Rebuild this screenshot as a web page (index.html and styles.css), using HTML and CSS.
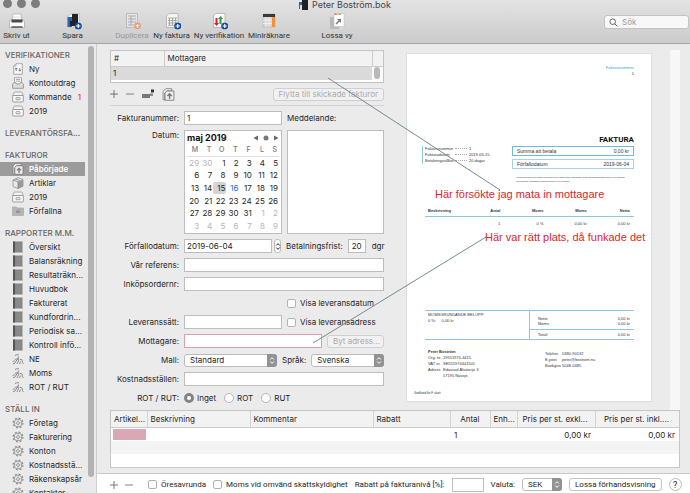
FILE: index.html
```html
<!DOCTYPE html>
<html lang="sv">
<head>
<meta charset="utf-8">
<title>Peter Boström.bok</title>
<link rel="stylesheet" href="styles.css">
</head>
<body>
<svg class="defs" aria-hidden="true">
  <symbol id="i-plus-badge" viewBox="0 0 8 8"><circle cx="4" cy="4" r="3.8" fill="currentColor"/><path d="M4 1.8v4.4M1.8 4h4.4" stroke="#fff" stroke-width="1.2"/></symbol>
  <symbol id="i-page" viewBox="0 0 12 12"><path d="M4 .7h6.3v10.6H1.700V3z" fill="#f7f7f7" stroke="#999" stroke-width=".8"/><path d="M1.700 3H4V.7" fill="none" stroke="#999" stroke-width=".7"/><path d="M4.200 8V5M3 6.200l1.200-1.300 1.200 1.300M7.800 5v3M6.600 6.900l1.200 1.300L9 6.900" fill="none" stroke="#777" stroke-width=".9"/></symbol>
  <symbol id="i-tray" viewBox="0 0 12 12"><path d="M2.500 6V.7h7V6M4 2.500h4M4 4.200h4" fill="#f5f5f5" stroke="#999" stroke-width=".8"/><path d="M.6 7.500 2 5.500h1.500l1 1.500h3l1-1.500H10l1.400 2v3.800H.6z" fill="#ddd" stroke="#888" stroke-width=".8"/></symbol>
  <symbol id="i-box" viewBox="0 0 12 12"><path d="M2.300 1h7.400l1.600 3.500H.7z" fill="#f2f2f2" stroke="#999" stroke-width=".8"/><rect x=".6" y="4.500" width="10.800" height="6.500" rx="1" fill="#f6f6f6" stroke="#8d8d8d" stroke-width=".8"/><rect x="4" y="6.700" width="4" height="2" rx=".5" fill="#fff" stroke="#777" stroke-width=".7"/></symbol>
  <symbol id="i-upload" viewBox="0 0 12 12"><path d="M1 3.200 3.500.6H9v2H5L2.500 5v6H1z" fill="#eee" stroke="currentColor" stroke-width=".7"/><path d="M4.300 2.800H11v8.500H2.800V4.500z" fill="#eee" stroke="currentColor" stroke-width=".8"/><path d="M7 10V5.600M5 7.400 7 5.400l2 2" fill="none" stroke="currentColor" stroke-width="1.300"/></symbol>
  <symbol id="i-cube" viewBox="0 0 12 12"><path d="m1 3 5-2.300 5 1.800v6.800l-5 2.200-5-2z" fill="#e9e9e9" stroke="#888" stroke-width=".7"/><path d="m6 4.700 5-2.200v6.800l-5 2.200z" fill="#999"/><path d="m1 3 5 1.700v6.800M3.300 1.900l5 1.800" fill="none" stroke="#777" stroke-width=".7"/></symbol>
  <symbol id="i-folder" viewBox="0 0 12 12"><path d="M.5 2h4l1 1h6v7.500H.5z" fill="#b5b5b5" stroke="#a3a3a3" stroke-width=".6"/><circle cx="6" cy="6.500" r="2" fill="#888"/><path d="M4.200 5.700h3.600M5 8h2" stroke="#ccc" stroke-width=".6"/></symbol>
  <symbol id="i-book" viewBox="0 0 12 12"><rect x="1" y=".5" width="10" height="11" fill="#858585"/><path d="M2 .5v11" stroke="#555" stroke-width="2"/><path d="M4.500 3h4M4.500 5h4M4.500 7h4M4.500 9h4" stroke="#999" stroke-width=".7"/><path d="M10.500.5v11" stroke="#bbb"/></symbol>
  <symbol id="i-crest" viewBox="0 0 12 12"><path d="M3 2.500c2-1.500 3 0 4-1M1 10.800c1.500-.2 2.600-1 3-2.600l2-2.500c-1.500 0-2.200 1-3.200.5M6.500 3.500c-1 1.500.8 2.500 0 4.300-.4 1.300-1.500 2-1.300 3.200M8 6.500c1.500-.5 2.500.5 2.300 2s1 1.500 1 2.500M8.500 8.500l-1 2.500M.8 8.500l2-.8" fill="none" stroke="#858585" stroke-width="1"/></symbol>
  <symbol id="i-gear" viewBox="0 0 12 12"><circle cx="6" cy="6" r="4.900" fill="none" stroke="#888" stroke-width="1.200" stroke-dasharray="1.900 1.950"/><circle cx="6" cy="6" r="3.900" fill="#f1f1f1" stroke="#888" stroke-width=".8"/><circle cx="6" cy="6" r="1.500" fill="#ddd" stroke="#888" stroke-width=".7"/><path d="M6 2.200v2.300M6 7.500v2.300M2.200 6h2.300M7.500 6h2.300" stroke="#999" stroke-width=".6"/></symbol>
  <symbol id="i-updown" viewBox="0 0 6 9"><path d="M1.200 3.500 3 1.600l1.800 1.900M1.200 5.500 3 7.400l1.800-1.900" fill="none" stroke="currentColor" stroke-width="1"/></symbol>
</svg>

<header class="toolbar">
  <div class="titlebar">
    <span class="lights"><i></i><i></i><i></i></span>
    <h1><svg viewBox="0 0 9 10"><path d="M0 2h3v7H0z" fill="#2c62b5"/><path d="M1 5h3v5H1z" fill="#ddd"/><path d="M3 0h6v10H3z" fill="#1d2126"/></svg>Peter Boström.bok</h1>
  </div>
  <nav class="tools">
    <button><svg viewBox="0 0 18 18"><path d="M5 2h8l1 7H4z" fill="#fff" stroke="#aaa" stroke-width=".7"/><path d="M2.500 8h13l1 2v5.500h-15V10z" fill="#fff" stroke="#999" stroke-width=".6"/><path d="M3.500 7.500h11v3h-11z" fill="#4a4a4a"/><path d="M3.500 15h11" stroke="#555" stroke-width="1.500"/><path d="M5 5h8" stroke="#ddd"/></svg>Skriv ut</button>
    <button><svg viewBox="0 0 18 18"><path d="M4 4l4-2.500h7V15H4z" fill="#fff" stroke="#aaa" stroke-width=".6"/><path d="M3.500 5H8v10H3.500z" fill="#2c62b5"/><path d="M8 2h6v12H6V9h2z" fill="#202429"/><use href="#i-plus-badge" x="10.500" y="10.300" width="7.500" height="7.500" color="#174fa3"/></svg>Spara</button>
    <button disabled><svg viewBox="0 0 18 18"><path d="M3.500 1.500h11v14h-11z" fill="#e6e6e6" stroke="#aaa" stroke-width=".7"/><path d="M5 4h8M5 7h8M5 10h8M5 13h6M8 4v9" stroke="#aaa" stroke-width="1"/><use href="#i-plus-badge" x="11" y="10.300" width="7" height="7" color="#e69a74"/></svg>Duplicera</button>
    <button><svg viewBox="0 0 18 18"><path d="M6 1.500h9v14H3.500V4z" fill="#f6f6f6" stroke="#a5a5a5" stroke-width=".7"/><path d="M5 6h9M5 8.500h9M5 11h9M5 13.300h9M6.500 6v7M9.500 6v7M12.500 6v7" stroke="#999" stroke-width=".8"/><use href="#i-plus-badge" x="11" y="10.300" width="7.500" height="7.500" color="#174fa3"/></svg>Ny faktura</button>
    <button><svg viewBox="0 0 18 18"><path d="M6 1.500h9v14H3.500V4z" fill="#fafafa" stroke="#a5a5a5" stroke-width=".7"/><path d="M5.500 6h2v5H9l-2.500 3L4 11h1.500z" fill="#df2027"/><path d="M9.500 12h2V7H13l-2.500-3L8 7h1.500z" fill="#2e9b40"/><use href="#i-plus-badge" x="11" y="10.300" width="7.500" height="7.500" color="#174fa3"/></svg>Ny verifikation</button>
    <button><svg viewBox="0 0 18 18"><path d="M3 2h12v13H3z" fill="#d7d7d7" stroke="#aaa" stroke-width=".5"/><path d="M12 5h3v10h-3z" fill="#f3923a"/><path d="M6 5v10M9 5v10M3 8h9M3 11.500h9" stroke="#f8f8f8" stroke-width=".7"/><path d="M3 2h12v3H3z" fill="#38393c"/></svg>Miniräknare</button>
    <button><svg viewBox="0 0 18 18"><path d="M2 5h9v12H2z" fill="#b9b9b9"/><path d="M6 1.500h10v13H6z" fill="#fff" stroke="#bbb" stroke-width=".5"/><path d="M6.500 2.200h2.200" stroke="#e65148" stroke-width="1.300"/><path d="M8.700 2.200h2.200" stroke="#f2b93b" stroke-width="1.300"/><path d="M10.900 2.200h2.200" stroke="#63c257" stroke-width="1.300"/><path d="m8 12 3.500-3.500" stroke="#777" stroke-width="1.500"/><path d="M9 7h4v4z" fill="#777"/></svg>Lossa vy</button>
    <label class="search"><svg viewBox="0 0 9 9"><circle cx="3.700" cy="3.700" r="2.800" fill="none" stroke="#555" stroke-width=".9"/><path d="m5.800 5.800 2.500 2.500" stroke="#555" stroke-width="1"/></svg><input type="search" placeholder="Sök" aria-label="Sök"></label>
  </nav>
</header>

<div class="body">
  <aside class="sidebar">
    <section><h2>VERIFIKATIONER</h2>
      <a href="#"><svg><use href="#i-page"/></svg>Ny</a>
      <a href="#"><svg><use href="#i-tray"/></svg>Kontoutdrag</a>
      <a href="#"><svg><use href="#i-box"/></svg>Kommande<b>1</b></a>
      <a href="#"><svg><use href="#i-box"/></svg>2019</a></section>
    <section><h2>LEVERANTÖRSFA...</h2></section>
    <section><h2>FAKTUROR</h2>
      <a href="#" class="selected"><svg><use href="#i-upload"/></svg>Påbörjade</a>
      <a href="#"><svg><use href="#i-cube"/></svg>Artiklar</a>
      <a href="#"><svg><use href="#i-box"/></svg>2019</a>
      <a href="#"><svg><use href="#i-folder"/></svg>Förfallna</a></section>
    <section><h2>RAPPORTER M.M.</h2>
      <a href="#"><svg><use href="#i-book"/></svg>Översikt</a>
      <a href="#"><svg><use href="#i-book"/></svg>Balansräkning</a>
      <a href="#"><svg><use href="#i-book"/></svg>Resultaträkn...</a>
      <a href="#"><svg><use href="#i-book"/></svg>Huvudbok</a>
      <a href="#"><svg><use href="#i-book"/></svg>Fakturerat</a>
      <a href="#"><svg><use href="#i-book"/></svg>Kundfordrin...</a>
      <a href="#"><svg><use href="#i-book"/></svg>Periodisk sa...</a>
      <a href="#"><svg><use href="#i-book"/></svg>Kontroll infö...</a>
      <a href="#"><svg><use href="#i-crest"/></svg>NE</a>
      <a href="#"><svg><use href="#i-crest"/></svg>Moms</a>
      <a href="#"><svg><use href="#i-crest"/></svg>ROT / RUT</a></section>
    <section><h2>STÄLL IN</h2>
      <a href="#"><svg><use href="#i-gear"/></svg>Företag</a>
      <a href="#"><svg><use href="#i-gear"/></svg>Fakturering</a>
      <a href="#"><svg><use href="#i-gear"/></svg>Konton</a>
      <a href="#"><svg><use href="#i-gear"/></svg>Kostnadsstä...</a>
      <a href="#"><svg><use href="#i-gear"/></svg>Räkenskapsår</a>
      <a href="#"><svg><use href="#i-gear"/></svg>Kontakter</a></section>
    <span class="scrollbar"></span>
  </aside>

  <main>
    <div class="workspace">
      <div class="editor">
        <div class="invoices">
          <table>
            <thead><tr><th class="num">#</th><th>Mottagare</th><th class="bar"></th></tr></thead>
            <tbody><tr><td>1</td><td></td><td class="bar"><span class="thumb"></span></td></tr></tbody>
          </table>
        </div>
        <div class="actions">
          <button aria-label="Lägg till"><svg viewBox="0 0 8 8"><path d="M4 0v8M0 4h8" stroke="#666" stroke-width=".9"/></svg></button>
          <button aria-label="Ta bort"><svg viewBox="0 0 8 8"><path d="M0 4h8" stroke="#777" stroke-width=".9"/></svg></button>
          <button aria-label="Betala"><svg class="wide" viewBox="0 0 12 12"><path d="M0 6h8v4H0z" fill="#777"/><path d="M9 1.500h3v3H9z" fill="#333"/><path d="M8 5.500h3V8H8z" fill="#8a8a8a"/></svg></button>
          <button aria-label="Skicka"><svg class="wide tall"><use href="#i-upload"/></svg></button>
          <button class="push" disabled>Flytta till skickade fakturor</button>
        </div>
        <form class="form">
          <div class="row"><label class="name" for="nr">Fakturanummer:</label><input class="half" id="nr" value="1"><label for="msg">Meddelande:</label></div>
          <div class="row tall-row"><span class="name">Datum:</span>
            <div class="calendar">
              <div class="month"><b>maj 2019</b><svg viewBox="0 0 26 6"><path d="M5 .5v5L.5 3zM21 .5v5L25.500 3z" fill="#666"/><circle cx="13" cy="3" r="2.500" fill="#777"/></svg></div>
              <table>
                <thead><tr><th>M</th><th>T</th><th>O</th><th>T</th><th>F</th><th>L</th><th>S</th></tr></thead>
                <tbody>
                <tr><td class="off">29</td><td class="off">30</td><td>1</td><td>2</td><td>3</td><td>4</td><td>5</td></tr>
                <tr><td>6</td><td>7</td><td>8</td><td>9</td><td>10</td><td>11</td><td>12</td></tr>
                <tr><td>13</td><td>14</td><td class="picked">15</td><td class="today">16</td><td>17</td><td>18</td><td>19</td></tr>
                <tr><td>20</td><td>21</td><td>22</td><td>23</td><td>24</td><td>25</td><td>26</td></tr>
                <tr><td>27</td><td>28</td><td>29</td><td>30</td><td>31</td><td class="off">1</td><td class="off">2</td></tr>
                <tr><td class="off">3</td><td class="off">4</td><td class="off">5</td><td class="off">6</td><td class="off">7</td><td class="off">8</td><td class="off">9</td></tr>
                </tbody>
              </table>
            </div>
            <textarea id="msg"></textarea></div>
          <div class="row"><label class="name" for="due">Förfallodatum:</label><input class="date" id="due" value="2019-06-04"><span class="stepper"><svg viewBox="0 0 6 9"><use href="#i-updown"/></svg></span><label for="days">Betalningsfrist:</label><input class="days" id="days" value="20"><span class="unit">dgr</span></div>
          <div class="row"><label class="name" for="ref">Vår referens:</label><input class="fill" id="ref"></div>
          <div class="row"><label class="name" for="po">Inköpsordernr:</label><input class="fill" id="po"></div>
          <div class="row"><span class="name"></span><span class="half"></span><label class="check"><input type="checkbox">Visa leveransdatum</label></div>
          <div class="row"><label class="name" for="ship">Leveranssätt:</label><input class="half" id="ship"><label class="check"><input type="checkbox">Visa leveransadress</label></div>
          <div class="row"><label class="name" for="rcpt">Mottagare:</label><input class="fill invalid" id="rcpt"><button type="button" class="push address" disabled>Byt adress...</button></div>
          <div class="row"><label class="name" for="tpl">Mall:</label><span class="select tpl"><select id="tpl"><option>Standard</option></select><svg viewBox="0 0 6 9"><use href="#i-updown"/></svg></span><label for="lang">Språk:</label><span class="select fill"><select id="lang"><option>Svenska</option></select><svg viewBox="0 0 6 9"><use href="#i-updown"/></svg></span></div>
          <div class="row"><label class="name" for="cost">Kostnadsställen:</label><input class="fill" id="cost"></div>
          <div class="row radios"><span class="name">ROT / RUT:</span><label><input type="radio" name="rot" checked>Inget</label><label><input type="radio" name="rot">ROT</label><label><input type="radio" name="rot">RUT</label></div>
        </form>
      </div>

      <div class="preview">
        <article class="paper">
          <div class="p-number"><span>Fakturanummer</span><br>1</div>
          <h3>FAKTURA</h3>
          <div class="p-top">
            <dl class="p-facts"><dt>Fakturanummer</dt><i></i><dd>1</dd><dt>Fakturadatum</dt><i></i><dd>2019-05-15</dd><dt>Betalningsvillkor</dt><i></i><dd>20 dagar</dd></dl>
            <div class="p-due">
              <p class="strong"><span>Summa att betala</span><span>0,00 kr</span></p>
              <p><span>Förfallodatum</span><span>2019-06-04</span></p>
              <small>Anmärkning mot denna faktura ska göras inom 8 dagar. Efter förfallodagen debiteras dröjsmålsränta med 8% över gällande referensränta. Lagstadgad påminnelseavgift 60 kr tillkommer.</small>
            </div>
          </div>
          <table class="p-lines">
            <thead><tr><th>Beskrivning</th><th>Antal</th><th>Moms</th><th>Moms</th><th>Netto</th></tr></thead>
            <tbody><tr><td></td><td>1</td><td>0 %</td><td>0,00 kr</td><td>0,00 kr</td></tr></tbody>
          </table>
          <div class="p-totals">
            <div class="p-vat">MOMSGRUNDANDE BELOPP:<br>0 %: &nbsp; &nbsp; 0,00 kr</div>
            <div class="p-sum"><p><span>Netto</span><span>0,00 kr</span></p><p><span>Moms</span><span>0,00 kr</span></p><p class="total"><span>Totalt</span><span>0,00 kr</span></p></div>
          </div>
          <footer class="p-foot">
            <div><b>Peter Boström</b><dl><dt>Org. nr.</dt><dd>19551974-4415</dd><dt>VAT nr.</dt><dd>SE551974441501</dd><dt>Adress</dt><dd>Edåsvad Alsäterjö 3<br>57195 Nässjö</dd></dl></div>
            <div class="p-contact"><dl><dt>Telefon</dt><dd>0380-90132</dd><dt>E-post</dt><dd>peter@bostrom.nu</dd><dt>Bankgiro</dt><dd>5048-0485</dd></dl></div>
          </footer>
          <p class="p-tax">Godkänd för F-skatt</p>
        </article>
        <span class="gutter"></span>
      </div>
    </div>

    <div class="lines">
      <table>
        <colgroup><col class="c-art"><col class="c-desc"><col><col class="c-disc"><col class="c-qty"><col class="c-unit"><col class="c-ex"><col class="c-inc"></colgroup>
        <thead><tr><th>Artikel...</th><th>Beskrivning</th><th>Kommentar</th><th>Rabatt</th><th class="r">Antal</th><th>Enh...</th><th>Pris per st. exkl...</th><th class="r">Pris per st. inkl....</th></tr></thead>
        <tbody>
          <tr><td><span class="missing"></span></td><td></td><td></td><td></td><td>1</td><td></td><td class="r">0,00 kr</td><td class="r">0,00 kr</td></tr>
          <tr><td colspan="8"></td></tr>
          <tr><td colspan="8"></td></tr>
        </tbody>
      </table>
    </div>

    <footer class="statusbar">
      <button aria-label="Lägg till rad"><svg viewBox="0 0 8 8"><path d="M4 0v8M0 4h8" stroke="#666" stroke-width=".9"/></svg></button>
      <button aria-label="Ta bort rad"><svg viewBox="0 0 8 8"><path d="M0 4h8" stroke="#777" stroke-width=".9"/></svg></button>
      <label class="check"><input type="checkbox">Öresavrunda</label>
      <label class="check"><input type="checkbox">Moms vid omvänd skattskyldighet</label>
      <label for="disc">Rabatt på fakturanivå [%]:</label><input class="disc" id="disc">
      <label for="cur">Valuta:</label><span class="select cur"><select id="cur"><option>SEK</option></select><svg viewBox="0 0 6 9"><use href="#i-updown"/></svg></span>
      <button class="push">Lossa förhandsvisning</button>
      <button class="help">?</button>
    </footer>
  </main>
</div>

<svg class="pointers" aria-hidden="true"><path d="M328 78 500 190M313 343l173-106" fill="none" stroke="#758c90" stroke-width="1"/></svg>
<p class="note note-first">Här försökte jag mata in mottagare</p>
<p class="note note-second">Här var rätt plats, då funkade det</p>
</body>
</html>
```

FILE: styles.css
```css
* { box-sizing: border-box; margin: 0; padding: 0; }
html, body { height: 100%; }
body {
  display: flex; flex-direction: column; position: relative; overflow: hidden;
  background: #ebebeb; color: #262626;
  font: 8px/10px Inter, "Liberation Sans", sans-serif;
}
button, input, select, textarea { font: inherit; color: inherit; border: 0; background: none; appearance: none; outline: 0; border-radius: 0; }
table { border-collapse: collapse; width: 100%; }
th { font-weight: 400; text-align: left; }
a { color: inherit; text-decoration: none; }
.defs { position: absolute; width: 0; height: 0; }

/* Window header */
.toolbar { flex: none; height: 44px; background: linear-gradient(#e3e3e3, #cbcbcb); border-bottom: 1px solid #a5a5a5; overflow: hidden; }
.titlebar { position: relative; height: 11px; }
.titlebar h1 { display: flex; justify-content: center; align-items: center; gap: 4px; height: 10px; font-size: 9px; font-weight: 400; color: #444; line-height: 10px; }
.titlebar h1 svg { width: 9px; height: 10px; }
.lights { position: absolute; left: 3px; top: -1px; display: flex; gap: 5px; }
.lights i { width: 9px; height: 9px; border-radius: 50%; background: #7d7d7d; }
.tools { display: grid; grid-template-columns: 33px 79px 40px 39px 56px 44px 92px 1fr; align-items: start; }
.tools button { display: flex; flex-direction: column; align-items: center; gap: 1px; white-space: nowrap; color: #333; font-family: Roboto, sans-serif; }
.tools button svg { width: 18px; height: 18px; margin-top: 1px; }
.tools button:disabled { color: #999; }
.search { justify-self: end; display: flex; align-items: center; gap: 4px; width: 85px; height: 14px; margin: 4px 1px 0 0; padding: 0 4px; background: #f8f8f8; border: 1px solid #c3c3c3; border-radius: 3px; }
.search svg { width: 9px; height: 9px; }
.search input { flex: 1; min-width: 0; }
.search input::placeholder { color: #999; }

/* Sidebar */
.body { flex: 1; display: flex; min-height: 0; }
.sidebar { position: relative; flex: none; width: 97px; padding-top: 4px; overflow: hidden; background: #eaeaea; border-right: 1px solid #cfcfcf; }
.sidebar section { margin-bottom: 8px; }
.sidebar h2 { padding-left: 5px; font-size: 8px; font-weight: 500; line-height: 14px; color: #666; white-space: nowrap; }
.sidebar a { display: flex; align-items: center; gap: 5px; width: 85px; height: 14px; padding-left: 12px; white-space: nowrap; }
.sidebar a svg { flex: none; width: 12px; height: 12px; }
.sidebar a b { margin-left: auto; padding-right: 4px; font-weight: 500; color: #f0323c; }
.sidebar .selected { background: #9b9b9b; color: #fff; font-weight: 600; }
.selected svg { color: #777; }
.scrollbar { position: absolute; right: 2px; top: 2px; bottom: 16px; width: 6px; border-radius: 3px; background: #b3b3b3; }

/* Work area */
main { flex: 1; display: flex; flex-direction: column; min-width: 0; }
.workspace { flex: 1; display: flex; min-height: 0; padding: 6px 10px 0 13px; }
.editor { flex: none; width: 274px; }
.invoices { border: 1px solid #c4c4c4; background: #fff; padding-bottom: 2px; }
.invoices th { height: 15px; padding-left: 3px; background: #f2f2f2; border-bottom: 1px solid #ccc; }
.invoices .num { width: 53px; }
.invoices th + th { border-left: 1px solid #ccc; }
.invoices td { height: 14px; padding-left: 2px; background: #dadada; }
.invoices .bar { width: 11px; }
.invoices td.bar { background: #fafafa; }
.thumb { display: block; width: 6px; height: 12px; border-radius: 3px; background: #b9b9b9; }
.actions { display: flex; align-items: center; gap: 8px; height: 23px; border-bottom: 1px solid #d4d4d4; }
.actions svg, .statusbar > button > svg { display: block; width: 8px; height: 8px; }
.actions svg.wide { width: 12px; height: 12px; color: #777; }
.actions svg.tall { height: 13px; width: 13px; }
.push { height: 13px; padding: 0 5px; border: 1px solid #c2c2c2; border-radius: 3px; background: #fff; white-space: nowrap; line-height: 10px; }
.push:disabled { background: #f1f1f1; border-color: #cfcfcf; color: #aaa; }
.actions .push { margin-left: auto; }

/* Form */
.form { display: flex; flex-direction: column; gap: 5px; padding-top: 5px; }
.row { display: flex; align-items: center; gap: 5px; height: 14px; white-space: nowrap; }
.row .name { flex: none; width: 69px; text-align: right; }
.row > input, .row > textarea, .calendar, .disc { background: #fff; border: 1px solid #bdbdbd; height: 14px; padding: 0 2px; }
.row > .half { flex: none; width: 98px; }
.row > .fill { flex: 1; min-width: 0; }
.row > .invalid { border-color: #dc9fae; }
.tall-row { height: 104px; align-items: stretch; }
.row .calendar { flex: none; width: 98px; }
.row > textarea { flex: 1; min-width: 0; resize: none; }
.row .calendar, .row > textarea { height: auto; }
.calendar { padding: 1px 2px 0; }
.month { display: flex; align-items: center; justify-content: space-between; height: 12px; font-size: 9px; color: #111; }
.month svg { width: 26px; height: 6px; }
.calendar table { table-layout: fixed; height: 88px; }
.calendar th { height: 12px; font-size: 7px; font-weight: 500; color: #777; text-align: right; padding-right: 2px; border-bottom: 1px solid #ddd; }
.calendar td { line-height: 12px; text-align: right; padding-right: 1px; }
.calendar .off { color: #b5b5b5; }
.picked { background: #d5d5d5; border-radius: 2px; }
.today { color: #1c6fd0; }
.row .date { width: 88px; }
.stepper { display: grid; place-items: center; width: 7px; height: 14px; margin-left: -3px; border: 1px solid #bbb; border-radius: 3px; background: #fff; }
.stepper svg { width: 6px; height: 9px; }
.row .days { width: 18px; margin-left: auto; text-align: center; }
.unit { padding-left: 1px; }
.check { display: flex; align-items: center; gap: 4px; }
.check input { width: 9px; height: 9px; border: 1px solid #b3b3b3; border-radius: 2px; background: #fff; }
.address { width: 57px; }
.select { position: relative; display: block; }
.select select { display: block; width: 100%; height: 13px; padding-left: 5px; border: 1px solid #bbb; border-radius: 3px; background: #fff; }
.select svg { position: absolute; right: 0; top: 0; width: 10px; height: 13px; padding: 2px; color: #fff; background: #929292; border-radius: 0 3px 3px 0; pointer-events: none; }
.tpl { width: 93px; }
.radios { gap: 8px; }
.radios .name { margin-right: -3px; }
.radios label { display: flex; align-items: center; gap: 3px; }
.radios input { width: 10px; height: 10px; border: 1px solid #b3b3b3; border-radius: 50%; background: #fff; }
.radios input:checked { border: 3px solid #848484; }

/* Invoice preview */
.preview { flex: 1; display: flex; justify-content: space-between; align-items: flex-start; padding-left: 22px; }
.paper { display: flex; flex-direction: column; width: 246px; height: 349px; margin-top: 3px; padding: 11px 17px 0 15px; background: #fff; border: 1px solid #dedede; font: 4px/6px "Liberation Sans", sans-serif; color: #333; }
.gutter { align-self: stretch; width: 10px; background: #f7f7f7; }
.p-number { text-align: right; }
.p-number span { color: #3a9fd6; }
.paper h3 { margin-top: 58px; text-align: right; font: bold 8px/10px Roboto, sans-serif; color: #111; }
.p-top { display: flex; justify-content: space-between; margin-top: 1px; height: 60px; }
.p-facts { display: grid; grid-template-columns: 28px 12px 1fr; column-gap: 2px; width: 69px; height: 18px; padding-left: 2px; border-left: 1px solid #8cc6e4; white-space: nowrap; }
.p-facts i { height: 3px; border-bottom: 1px dotted #aaa; }
.p-due { width: 122px; }
.p-due p { display: flex; justify-content: space-between; margin-bottom: 3px; padding: 0 4px; border: 1px solid #a6d2e8; font-size: 5px; line-height: 8px; }
.p-due .strong { border-color: #6fb9df; }
.p-due small { display: block; padding: 3px 3px 0 4px; font-size: 2px; line-height: 4px; }
.p-lines { width: 209px; margin-left: 3px; table-layout: fixed; text-align: right; }
.paper th { font-weight: 700; text-align: right; height: 10px; padding: 0 4px 0 3px; border-bottom: 1px solid #8cc6e4; }
.paper th:first-child { width: 36px; text-align: left; }
.paper td { height: 16px; padding-right: 4px; }
.p-totals { display: grid; grid-template-columns: 104px 1fr; height: 30px; margin: 78px 0 0 3px; border: solid #8cc6e4; border-width: 1px 0; }
.p-vat { padding: 1px 3px; }
.p-sum { border-left: 1px solid #8cc6e4; padding-top: 5px; }
.p-sum p { display: flex; justify-content: space-between; padding: 0 4px 0 8px; line-height: 5px; }
.p-sum .total { margin-top: 3px; padding-top: 2px; border-top: 1px solid #8cc6e4; }
.p-foot { display: grid; grid-template-columns: 117px 1fr; padding: 9px 0 0 6px; }
.paper dl { white-space: nowrap; }
.p-foot dl { display: grid; grid-template-columns: 15px 1fr; line-height: 6px; }
.p-foot .p-contact { padding-top: 2px; }
.p-foot .p-contact dl { grid-template-columns: 17px 1fr; }
.p-tax { margin: 11px 0 0 -8px; font-size: 3px; }

/* Invoice lines */
.lines { flex: none; margin: 0 10px 5px 13px; border: 1px solid #c6c6c6; background: #fff; }
.lines table { table-layout: fixed; }
.lines th { height: 17px; padding: 0 3px; background: #f2f2f2; border-bottom: 1px solid #ccc; white-space: nowrap; }
.lines th + th { border-left: 1px solid #d2d2d2; }
.lines td { height: 13px; padding: 0 4px; }
.lines tr:nth-child(2) td { background: #f4f4f4; }
.lines .r { text-align: right; }
.lines th.r { padding-right: 10px; }
.lines th:nth-child(7) { padding-left: 5px; }
.lines td:first-child { padding: 1px 1px 1px 2px; }
.missing { display: block; height: 11px; background: #dba7b4; }
.c-art { width: 36px; } .c-desc { width: 103px; } .c-disc { width: 77px; } .c-qty { width: 40px; }
.c-unit { width: 27px; } .c-ex { width: 78px; } .c-inc { width: 84px; }

/* Bottom bar */
.statusbar { flex: none; display: flex; align-items: center; gap: 7px; height: 20px; padding: 2px 10px 0 13px; background: #fff; border-top: 1px solid #c9c9c9; white-space: nowrap; font-family: Roboto, sans-serif; }
.statusbar > * { flex: none; }
.statusbar button + .check { margin-left: 8px; }
.disc { width: 32px; }
.cur { width: 40px; }
.statusbar button.help { width: 13px; height: 13px; margin-left: auto; border: 1px solid #bbb; border-radius: 50%; font-size: 9px; }

/* Annotations over the window */
.pointers { position: absolute; left: 0; top: 0; width: 100%; height: 100%; pointer-events: none; }
.note { position: absolute; font: 11px/12px "Liberation Sans", sans-serif; color: #e0242b; white-space: nowrap; }
.note-first { left: 435px; top: 188px; }
.note-second { left: 485px; top: 231px; }
```
